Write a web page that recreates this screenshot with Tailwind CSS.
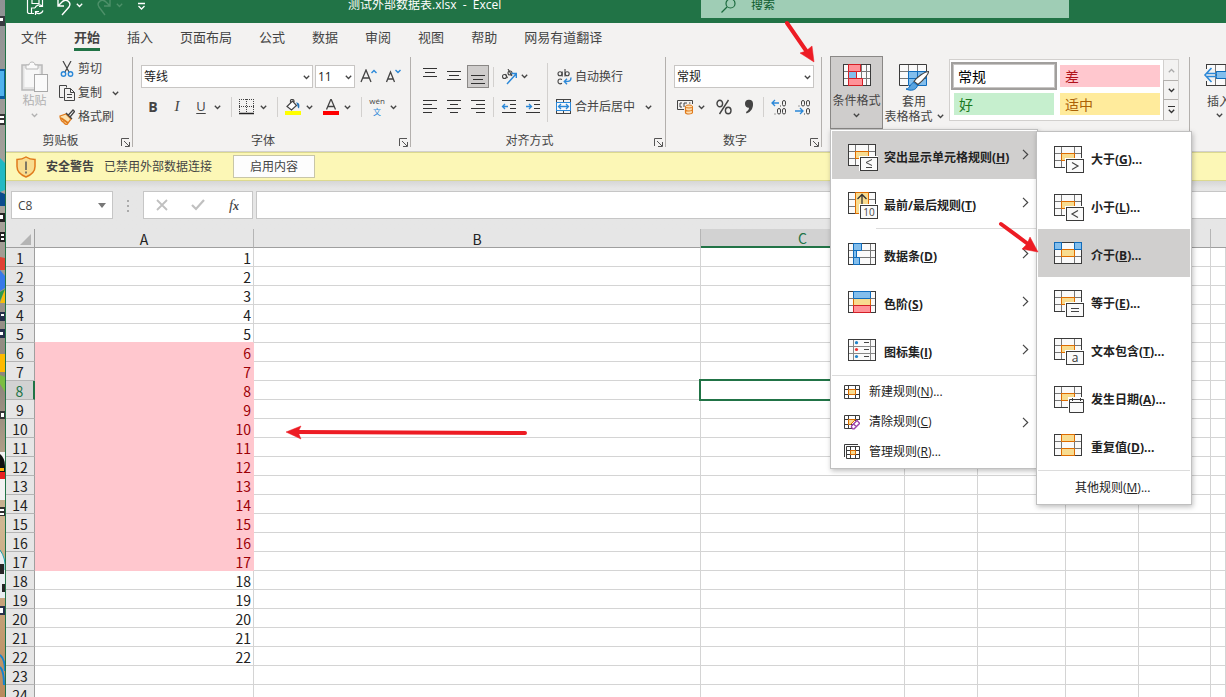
<!DOCTYPE html>
<html lang="zh-CN">
<head>
<meta charset="utf-8">
<title>测试外部数据表.xlsx - Excel</title>
<meta name="viewport" content="width=device-width, initial-scale=1">
<script src="https://cdn.jsdelivr.net/npm/@tailwindcss/browser@4"></script>
</head>
<body class="relative flex h-screen overflow-hidden bg-white font-['Open_Sans','Noto_Sans_CJK_SC',sans-serif] text-xs text-[#444444]">

<!-- shared icon symbols -->
<svg class="hidden" aria-hidden="true">
  <symbol id="chev" viewBox="0 0 7 5"><path d="M.8 .8 3.5 3.5 6.2 .8" fill="none" stroke="currentColor" stroke-width="1.3"/></symbol>
  <symbol id="launch" viewBox="0 0 9 9"><path d="M.5 8V.5H8M3 3l5 5M8.500 4v4.500H4" fill="none" stroke="#555"/></symbol>
  <symbol id="more" viewBox="0 0 7 11"><path d="M1 .8 5.700 5.500 1 10.200" fill="none" stroke="#444" stroke-width="1.200"/></symbol>
  <symbol id="grid" viewBox="0 0 30 27"><rect x=".5" y=".5" width="27" height="21" fill="#fafafa"/><path d="M7.500 1v20M20.500 1v20M1 7.500h26M1 14.500h26" stroke="#777" fill="none"/><rect x=".5" y=".5" width="27" height="21" fill="none" stroke="#3b3b3b"/></symbol>
  <symbol id="gridmid" viewBox="0 0 30 27"><use href="#grid" width="30" height="27"/><rect x="7.500" y="7.500" width="13" height="7" fill="#f8dc90" stroke="#de6c00"/></symbol>
  <symbol id="badge" viewBox="0 0 30 27"><path d="M11 12h19v15H11z" fill="#fff"/><rect x="12.500" y="13.500" width="17" height="13" fill="#fafafa" stroke="#3b3b3b"/></symbol>
</svg>

<!-- strip of desktop at the left of the window -->
<svg class="h-full w-[5px] shrink-0" viewBox="0 0 5 697" preserveAspectRatio="none" aria-hidden="true">
  <defs><linearGradient id="desk" x1="0" y1="0" x2="0" y2="1"><stop offset="0" stop-color="#8f9294"/><stop offset=".3" stop-color="#a9a49c"/><stop offset=".55" stop-color="#8d857b"/><stop offset=".75" stop-color="#d0b793"/><stop offset="1" stop-color="#b98a5c"/></linearGradient></defs>
  <path d="M0 0h5v697H0z" fill="url(#desk)"/>
  <path d="M0 16h5v10H0z" fill="#383a40"/><path d="M0 18h3v3H0z" fill="#fff"/>
  <path d="M0 69h5v30H0z" fill="#0a5c9d"/><path d="M0 71h4v25H0z" fill="#50b3ee"/>
  <path d="M0 114h5v11H0z" fill="#333"/><path d="M0 116h4v2H0zM0 120h4v3H0z" fill="#fff"/>
  <path d="M0 158l5 5v27l-5 2z" fill="#22b9c4"/><path d="M0 192l5 2v12H0z" fill="#0b4c8e"/>
  <path d="M0 213h5v9H0zM0 232h5v10H0z" fill="#222"/><path d="M0 215h3v4H0zM1 234h3v2H1zM1 238h3v2H1z" fill="#fff"/>
  <path d="M0 257l5 1v12H0z" fill="#df4335"/><path d="M0 270l5 6v12l-5 3z" fill="#3879e8"/><path d="M5 289v14H0z" fill="#f7bd09"/><path d="M0 292l5-3-5 12z" fill="#2a9b4b"/>
  <path d="M0 312h5v9H0zM0 329h5v9H0z" fill="#26304a"/><path d="M1 314h3v2H1zM0 332h3v3H0z" fill="#fff"/>
  <path d="M0 354h5v18H0z" fill="#fdba00"/><path d="M0 375l5 2v15l-5-8z" fill="#7cbd41"/>
  <path d="M0 411h5v8H0z" fill="#353535"/><path d="M1 413h3v4H1z" fill="#fff"/>
  <path d="M0 452h5v48H0z" fill="#f2f2f2"/><path d="M0 454q5 4 5 12v9H0z" fill="#111"/><path d="M0 472h5v7H0z" fill="#e72020"/><path d="M0 468h4v3H0z" fill="#fcb30a"/>
  <path d="M0 507h5v9H0z" fill="#303030"/><path d="M0 509h4v2H0zM0 513h4v2H0z" fill="#fff"/>
  <path d="M0 551q5 4 5 14v33H0z" fill="#e9eef0"/><path d="M0 550q6 8 5 20" stroke="#1aa2ad" fill="none"/><path d="M0 564h4v10H0zM2 584h3v8H2z" fill="#252525"/>
  <path d="M0 606h5v9H0z" fill="#26304a"/><path d="M0 608h3v5H0z" fill="#fff"/>
  <path d="M0 655q5 4 5 16M0 667q4 4 4 18" stroke="#1383cf" stroke-width="2" fill="none"/>
</svg>

<div class="flex min-w-0 flex-1 flex-col border-l border-[#217346] bg-[#e6e6e6]">

  <!-- title bar -->
  <header class="relative flex h-[23px] shrink-0 items-start bg-[#217346] text-white">
    <div class="flex h-4 w-[152px] shrink-0 items-start gap-[10px] pl-5">
      <button aria-label="保存" class="w-5"><svg class="h-4 w-5" viewBox="0 0 20 16" fill="none" stroke="#fff" stroke-width="1.200"><path d="M1.500 0v12.500l1 1H8M6 0v3.500h7V0M5.500 13V8H9M16.500 0v3"/><path d="M9 8a4.300 4.300 0 0 1 7-2M16.500 3v3.500H13M17 10.500a4.300 4.300 0 0 1-7 2M9.500 15v-3.500H13"/></svg></button>
      <button aria-label="撤消" class="flex w-[30px] items-start gap-1"><svg class="h-4 w-4" viewBox="0 0 16 16" fill="none" stroke="#fff" stroke-width="1.400"><path d="M2 0v6h6M2 6l4-4c4-4 10 0 7 5L6 15"/></svg><svg class="mt-[3px] h-[5px] w-[7px]"><use href="#chev"/></svg></button>
      <button aria-label="恢复" disabled class="flex w-[30px] items-start gap-1 text-[#4d9069]"><svg class="h-4 w-4" viewBox="0 0 16 16" fill="none" stroke="currentColor" stroke-width="1.400"><path d="M14 0v6H8M14 6l-4-4C6-2 0 2 3 7l6 8"/></svg><svg class="mt-[3px] h-[5px] w-[7px]"><use href="#chev"/></svg></button>
      <button aria-label="自定义快速访问工具栏"><svg class="h-3 w-4" viewBox="0 0 16 12" fill="none" stroke="#fff" stroke-width="1.300"><path d="M2 3.500h7M2.500 6l3 3 3-3"/></svg></button>
    </div>
    <h1 class="ml-[190px] h-4 w-[160px] -mt-[3px] shrink-0 text-xs leading-4 whitespace-pre">测试外部数据表.xlsx  -  Excel</h1>
    <label class="ml-[193px] flex h-[18px] w-[368px] items-start bg-[#9fcdb5] pl-5 text-[#0e5c2f]">
      <svg class="h-[14px] w-4" viewBox="0 0 16 14" fill="none" stroke="#1c6a3e" stroke-width="1.200"><circle cx="9.500" cy="3.500" r="4.500"/><path d="M6 7 .5 12.500"/></svg>
      <input type="text" aria-label="搜索" placeholder="搜索" class="ml-[14px] h-[10px] flex-1 bg-transparent text-xs leading-[10px] outline-none placeholder:text-[#0e5c2f]">
    </label>
  </header>

  <!-- ribbon tabs -->
  <nav class="flex h-8 shrink-0 gap-[27px] bg-[#f3f2f1] pl-[15px] text-[13px] leading-7 whitespace-nowrap">
    <a href="#">文件</a>
    <a href="#" class="h-7 border-b-[3px] border-[#217346] font-bold">开始</a>
    <a href="#">插入</a><a href="#">页面布局</a><a href="#">公式</a><a href="#">数据</a><a href="#">审阅</a><a href="#">视图</a><a href="#">帮助</a><a href="#">网易有道翻译</a>
  </nav>

  <!-- ribbon -->
  <div class="flex h-[97px] shrink-0 items-start overflow-hidden border-b border-[#d2d0ce] bg-[#f3f2f1] pt-[2px] whitespace-nowrap">

    <section class="flex h-[90px] w-[127px] shrink-0 flex-col border-r border-[#b3b0ad]">
      <div class="flex flex-1">
        <button disabled class="flex w-[53px] flex-col items-center pt-1 pl-1 text-[#b1b1b1]">
          <svg class="h-8 w-7" viewBox="0 0 28 32" fill="none"><rect x="1" y="4" width="20" height="25" fill="#e3e3e3" stroke="#b9b9b9" stroke-width="1.500"/><rect x="3.500" y="7" width="15" height="19" fill="#f7f7f7"/><path d="M5 8V4h3c0-4 6-4 6 0h3v4z" fill="#fafafa" stroke="#b9b9b9"/><rect x="13.500" y="13.500" width="13" height="17" fill="#fafafa" stroke="#a8a8a8"/></svg>
          <span class="leading-4">粘贴</span><svg class="mt-1 h-[5px] w-[7px]"><use href="#chev"/></svg>
        </button>
        <div class="flex flex-col">
          <button class="flex h-6 items-center gap-[3px]"><svg class="h-4 w-4" viewBox="0 0 16 16" fill="none"><path d="M4 0l6 11M12 0 6 11" stroke="#444" stroke-width="1.200"/><circle cx="4.500" cy="13" r="2.200" stroke="#2b88d8" stroke-width="1.400"/><circle cx="11.500" cy="13" r="2.200" stroke="#2b88d8" stroke-width="1.400"/></svg><span>剪切</span></button>
          <button class="flex h-6 items-center gap-[3px]"><svg class="h-4 w-4" viewBox="0 0 16 16" fill="none" stroke="#444"><path d="M4.500 12.500h-4V.5h7v2"/><path d="M5.500 3.500h6l4 4v8h-10zM11.500 3.500v4h4M8 9.500h5M8 12.500h5"/></svg><span>复制</span><svg class="ml-[7px] h-[5px] w-[7px]"><use href="#chev"/></svg></button>
          <button class="flex h-6 items-center gap-[3px]"><svg class="h-4 w-4" viewBox="0 0 16 16" fill="none"><path d="M1 7l6-2 5 5-4 5.500c-2 0-3-1-3.500-2.500C3 13 1 10 1 7z" fill="#fbe2b0" stroke="#e07a1b" stroke-width="1.300"/><path d="M2 9l7 5" stroke="#e07a1b" stroke-width="2"/><path d="M7 4l6 6M9 6.500 14 1l1.500 1.500L11 8" fill="#fff" stroke="#444" stroke-width="1.300"/></svg><span>格式刷</span></button>
        </div>
      </div>
      <div class="flex h-[14px] items-center leading-4"><span class="flex-1 pt-[2px] text-center">剪贴板</span><button aria-label="剪贴板设置" class="w-[17px]"><svg class="mt-1 ml-[6px] size-[9px]"><use href="#launch"/></svg></button></div>
    </section>

    <section class="flex h-[90px] w-[278px] shrink-0 flex-col border-r border-[#b3b0ad]">
      <div class="flex flex-1 flex-col gap-2 px-2 pt-2">
        <div class="flex h-[23px] items-center">
          <div class="relative h-[23px] w-[172px]"><select aria-label="字体" class="h-full w-full appearance-none border border-[#c8c6c4] bg-white pl-[2px] text-xs text-[#222]"><option>等线</option></select><svg class="pointer-events-none absolute top-[10px] right-[3px] h-[5px] w-[7px]"><use href="#chev"/></svg></div>
          <div class="relative ml-[2px] h-[23px] w-10"><select aria-label="字号" class="h-full w-full appearance-none border border-[#c8c6c4] bg-white pl-[2px] text-xs text-[#222]"><option>11</option></select><svg class="pointer-events-none absolute top-[10px] right-[3px] h-[5px] w-[7px]"><use href="#chev"/></svg></div>
          <button aria-label="增大字号" class="ml-[5px] w-[17px]"><svg class="h-4 w-[17px]" viewBox="0 0 17 16" fill="none"><path d="M1 13 6 1l5 12M2.700 9h6.600" stroke="#444" stroke-width="1.300"/><path d="M11.500 4 14 1.500 16.500 4" stroke="#2b88d8" stroke-width="1.400"/></svg></button>
          <button aria-label="减小字号" class="ml-2 w-[17px]"><svg class="h-4 w-[17px]" viewBox="0 0 17 16" fill="none"><path d="M1.500 13 5.500 3l4 10M3 10h5.200" stroke="#444" stroke-width="1.300"/><path d="M10.500 1 13 3.500 15.500 1" stroke="#2b88d8" stroke-width="1.400"/></svg></button>
        </div>
        <div class="flex h-[22px] items-center">
          <button aria-label="加粗" class="w-6 text-sm font-bold">B</button>
          <button aria-label="倾斜" class="w-6 font-['Liberation_Serif',serif] text-[15px] italic">I</button>
          <button aria-label="下划线" class="w-6 text-[13px] underline underline-offset-2">U</button>
          <button aria-label="下划线选项" class="flex w-[18px] justify-start pl-px"><svg class="h-[5px] w-[7px]"><use href="#chev"/></svg></button>
          <i class="h-5 w-px bg-[#d2d0ce]"></i>
          <button aria-label="边框" class="ml-[7px] flex items-center gap-[5px]"><svg class="size-4" viewBox="0 0 16 16" fill="none" stroke="#444"><path d="M.5 0v14M7.500 0v14M14.500 0v14M0 .5h15M0 7.500h15" stroke-dasharray="1 1"/><path d="M0 14.500h15" stroke="#222" stroke-width="1.500"/></svg><svg class="h-[5px] w-[7px]"><use href="#chev"/></svg></button>
          <i class="ml-[10px] h-5 w-px bg-[#d2d0ce]"></i>
          <button aria-label="填充颜色" class="ml-[7px] flex items-center gap-[5px]"><svg class="size-4" viewBox="0 0 16 16" fill="none"><path d="M2 7.500 7.500 2l4 4.500L6.500 11zM5.500 4V1.500C5.500 0 9 0 9 2v3" fill="#fff" stroke="#444" stroke-width="1.200"/><path d="M11 3.500c3 0 4 2 3 6-2-1-1-4-3-6z" fill="#2272b9"/><path d="M0 12h16v4H0z" fill="#ff0"/></svg><svg class="h-[5px] w-[7px]"><use href="#chev"/></svg></button>
          <button aria-label="字体颜色" class="ml-[10px] flex items-center gap-[5px]"><svg class="size-4" viewBox="0 0 16 16" fill="none"><path d="M3.500 10.500 8 0l4.500 10.500M5 7.500h6" stroke="#444" stroke-width="1.300"/><path d="M0 12h16v4H0z" fill="red"/></svg><svg class="h-[5px] w-[7px]"><use href="#chev"/></svg></button>
          <i class="ml-[10px] h-5 w-px bg-[#d2d0ce]"></i>
          <button aria-label="拼音指南" class="ml-[7px] flex items-center gap-[5px]"><span class="flex w-4 flex-col items-center text-[8px]"><span class="leading-[10px]">wén</span><span class="leading-3 text-[#2b88d8]">文</span></span><svg class="h-[5px] w-[7px]"><use href="#chev"/></svg></button>
        </div>
      </div>
      <div class="flex h-[14px] items-center leading-4"><span class="flex-1 pt-[2px] text-center">字体</span><button aria-label="字体设置" class="w-[17px]"><svg class="mt-1 ml-[6px] size-[9px]"><use href="#launch"/></svg></button></div>
    </section>

    <section class="flex h-[90px] w-[255px] shrink-0 flex-col border-r border-[#b3b0ad]">
      <div class="flex flex-1 pt-[6px]">
        <div class="flex flex-col gap-2 pt-[2px] pl-[7px]">
          <div class="flex h-[23px] items-center">
            <button aria-label="顶端对齐" class="w-6"><svg class="mx-auto h-[17px] w-[14px]" viewBox="0 0 14 17" stroke="#333"><path d="M0 .5h14M2 4.500h10M0 8.500h14"/></svg></button>
            <button aria-label="垂直居中" class="w-6"><svg class="mx-auto h-[17px] w-[14px]" viewBox="0 0 14 17" stroke="#333"><path d="M0 3.500h14M2 7.500h10M0 11.500h14"/></svg></button>
            <button aria-label="底端对齐" aria-pressed="true" class="ml-px h-[23px] w-[22px] border border-[#8a8886] bg-[#cfcdcc]"><svg class="mx-auto h-[17px] w-[14px]" viewBox="0 0 14 17" stroke="#333"><path d="M0 7.500h14M2 11.500h10M0 15.500h14"/></svg></button>
            <i class="ml-1 h-5 w-px bg-[#d2d0ce]"></i>
            <button aria-label="方向" class="ml-[7px] flex items-center gap-1"><svg class="h-4 w-4" viewBox="0 0 16 16" fill="none"><g stroke="#444" stroke-width="1.100"><circle cx="3.500" cy="7.500" r="2"/><path d="M4.500 5l2 4M7 0l4 7"/><circle cx="9" cy="4" r="2"/></g><path d="M6 15 15 5M10.500 4.500H15.300V9" stroke="#2b88d8" stroke-width="1.400"/></svg><svg class="h-[5px] w-[7px]"><use href="#chev"/></svg></button>
          </div>
          <div class="flex h-[22px] items-center">
            <button aria-label="左对齐" class="w-6"><svg class="mx-auto h-[14px] w-[14px]" viewBox="0 0 14 14" stroke="#333"><path d="M0 .5h14M0 4.500h9M0 8.500h14M0 12.500h9"/></svg></button>
            <button aria-label="居中" class="w-6"><svg class="mx-auto h-[14px] w-[14px]" viewBox="0 0 14 14" stroke="#333"><path d="M0 .5h14M3 4.500h8M0 8.500h14M3 12.500h8"/></svg></button>
            <button aria-label="右对齐" class="w-6"><svg class="mx-auto h-[14px] w-[14px]" viewBox="0 0 14 14" stroke="#333"><path d="M0 .5h14M5 4.500h9M0 8.500h14M5 12.500h9"/></svg></button>
            <i class="ml-[3px] h-5 w-px bg-[#d2d0ce]"></i>
            <button aria-label="减少缩进量" class="ml-[7px]"><svg class="h-[14px] w-4" viewBox="0 0 16 14" fill="none" stroke="#333"><path d="M1 .5h14M9 4.500h6M9 8.500h6M1 12.500h14"/><path d="M7 6.500H1.500M4 4 1.500 6.500 4 9" stroke="#2b88d8" stroke-width="1.300"/></svg></button>
            <button aria-label="增加缩进量" class="ml-2"><svg class="h-[14px] w-4" viewBox="0 0 16 14" fill="none" stroke="#333"><path d="M1 .5h14M9 4.500h6M9 8.500h6M1 12.500h14"/><path d="M1 6.500h5.500M4 4l2.500 2.500L4 9" stroke="#2b88d8" stroke-width="1.300"/></svg></button>
          </div>
        </div>
        <i class="ml-[6px] h-[59px] w-px bg-[#d2d0ce]"></i>
        <div class="flex flex-col gap-2 pt-[2px] pl-2">
          <button class="flex h-[23px] items-center"><svg class="h-4 w-4" viewBox="0 0 16 16" fill="none"><g stroke="#444" stroke-width="1.100"><circle cx="4" cy="4.800" r="2"/><path d="M6.200 2.500v5M9 0v7.500"/><circle cx="11.200" cy="4.800" r="2"/><path d="M6 10.500c-3-1.500-4 .5-4 2s1.500 3.200 4 1.800"/></g><path d="M15 8.500c0 3.500-1 4-6.500 4M11 9.800 8.300 12.500l2.700 2.800" stroke="#2b88d8" stroke-width="1.400"/></svg><span class="ml-[3px]">自动换行</span></button>
          <button class="flex h-[22px] items-center"><svg class="h-4 w-4" viewBox="0 0 16 16" fill="none"><rect x=".5" y=".5" width="14" height="14" stroke="#444"/><path d="M7.500 0v15" stroke="#444"/><rect x=".5" y="3.500" width="14" height="8" fill="#fafafa" stroke="#2b88d8"/><path d="M2.500 7.500h10M5 5 2.500 7.500 5 10M10 5l2.500 2.500L10 10" stroke="#2b88d8" stroke-width="1.300"/></svg><span class="ml-[3px]">合并后居中</span><svg class="ml-[10px] h-[5px] w-[7px]"><use href="#chev"/></svg></button>
        </div>
      </div>
      <div class="flex h-[14px] items-center leading-4"><span class="flex-1 pt-[2px] text-center">对齐方式</span><button aria-label="对齐设置" class="w-[17px]"><svg class="mt-1 ml-[6px] size-[9px]"><use href="#launch"/></svg></button></div>
    </section>

    <section class="flex h-[90px] w-[156px] shrink-0 flex-col border-r border-[#b3b0ad]">
      <div class="flex flex-1 flex-col gap-2 px-2 pt-2">
        <div class="relative h-[23px] w-[140px]"><select aria-label="数字格式" class="h-full w-full appearance-none border border-[#c8c6c4] bg-white pl-[2px] text-xs text-[#222]"><option>常规</option></select><svg class="pointer-events-none absolute top-[10px] right-[3px] h-[5px] w-[7px]"><use href="#chev"/></svg></div>
        <div class="flex h-[22px] items-center">
          <button aria-label="会计数字格式" class="ml-[3px] flex items-center gap-[5px]"><svg class="h-4 w-4" viewBox="0 0 16 16" fill="none"><path d="M7 10.500H.5v-9h15V5M5 4H3v4h2M7 8V4h3M12 4h1.500" stroke="#444"/><path d="M8.500 7.500h7v7h-7z" fill="#fde0b4"/><ellipse cx="12" cy="7.500" rx="3.500" ry="1.500" fill="#fde0b4" stroke="#e07a1b"/><path d="M8.500 7.500v6c0 2 7 2 7 0v-6M8.500 10.500c0 2 7 2 7 0" stroke="#e07a1b" stroke-width="1.200"/></svg><svg class="h-[5px] w-[7px]"><use href="#chev"/></svg></button>
          <button aria-label="百分比样式" class="ml-[9px] w-5"><svg class="mx-auto size-4" viewBox="0 0 16 16" fill="none" stroke="#444" stroke-width="1.400"><ellipse cx="3.800" cy="4.500" rx="2.800" ry="3.300"/><ellipse cx="12.200" cy="11.500" rx="2.800" ry="3.300"/><path d="M12.500 1 3.500 15"/></svg></button>
          <button aria-label="千位分隔样式" class="ml-[7px] w-4"><svg class="mx-auto h-4 w-[10px]" viewBox="0 0 10 16"><path d="M1 5a4 4 0 0 1 8-.5C9.300 9 7 13 2.500 14.500L2 13c2-1 3-2.500 3-4.200C3 9 1 7.500 1 5z" fill="#444"/></svg></button>
          <i class="ml-[6px] h-5 w-px bg-[#d2d0ce]"></i>
          <button aria-label="增加小数位数" class="ml-[7px]"><svg class="h-4 w-4" viewBox="0 0 16 16" fill="none"><path d="M8 4H1M4 1 1 4l3 3" stroke="#2b88d8" stroke-width="1.300"/><g stroke="#444"><rect x="11.500" y="1.500" width="3" height="5.500" rx="1.500"/><rect x="6.500" y="9.500" width="3" height="5.500" rx="1.500"/><rect x="11.500" y="9.500" width="3" height="5.500" rx="1.500"/><path d="M9 7h1M3.500 15h1"/></g></svg></button>
          <button aria-label="减少小数位数" class="ml-2"><svg class="h-4 w-4" viewBox="0 0 16 16" fill="none"><path d="M0 12h7.500M5 9l3 3-3 3" stroke="#2b88d8" stroke-width="1.300"/><g stroke="#444"><rect x="6.500" y="1.500" width="3" height="5.500" rx="1.500"/><rect x="11.500" y="1.500" width="3" height="5.500" rx="1.500"/><rect x="11.500" y="9.500" width="3" height="5.500" rx="1.500"/><path d="M3.500 7h1M9 15h1"/></g></svg></button>
        </div>
      </div>
      <div class="flex h-[14px] items-center leading-4"><span class="flex-1 pt-[2px] text-center">数字</span><button aria-label="数字设置" class="w-[17px]"><svg class="mt-1 ml-[6px] size-[9px]"><use href="#launch"/></svg></button></div>
    </section>

    <section class="flex h-[90px] w-[368px] shrink-0 items-start border-r border-[#b3b0ad] pl-2">
      <button aria-expanded="true" class="-mt-px flex h-[73px] w-[53px] flex-col items-center border border-[#8a8886] bg-[#cfcdcc] pt-[7px]">
        <svg class="h-[27px] w-[30px]" viewBox="0 0 30 27"><rect x="1.500" y=".5" width="27" height="21" fill="#fafafa"/><path d="M6.500 1v20M19.500 1v20M24.500 1v20M2 7.500h26M2 14.500h26" stroke="#777"/><rect x="1.500" y=".5" width="27" height="21" fill="none" stroke="#3b3b3b"/><path d="M6.500 .5h12v7h-12zM6.500 14.500h14v7h-14z" fill="#ff9298" stroke="#d41f26"/><path d="M6.500 7.500h8v7h-8z" fill="#83beec" stroke="#d41f26"/></svg>
        <span class="mt-[2px] leading-4">条件格式</span><svg class="mt-1 h-[5px] w-[7px]"><use href="#chev"/></svg>
      </button>
      <button class="ml-px flex w-[60px] flex-col items-center pt-[7px] leading-[15px]">
        <svg class="h-[27px] w-[31px]" viewBox="0 0 31 27"><rect x=".5" y=".5" width="27" height="21" fill="#fafafa"/><path d="M9.500 7.500h18v14h-18z" fill="#83beec"/><path d="M9.500 1v20M18.500 1v20M1 7.500h27M1 14.500h27" stroke="#777"/><path d="M9.500 7.500h18v14h-18zM18.500 7v14M9 14.500h19" fill="none" stroke="#0f6cbd"/><path d="M27.500 7V.5H.5v21H9" fill="none" stroke="#3b3b3b"/><path d="M15 17.500C18 13 26 7.500 29.500 7.500c.5 2-5 8.500-10.500 13z" fill="#fff" stroke="#444" stroke-width="1.100"/><path d="M7 25c4 0 4-6 8-6.500l3.500 3C17.500 26 12 27.500 7 25z" fill="#5aa4e0" stroke="#0f6cbd"/></svg>
        <span class="mt-[3px]">套用</span><span class="flex items-center">表格格式<svg class="ml-1 h-[5px] w-[7px]"><use href="#chev"/></svg></span>
      </button>
      <div class="mt-[2px] ml-[5px] flex h-[62px] w-[230px] border border-[#d2d0ce] bg-white font-['Noto_Sans_CJK_SC',sans-serif] text-sm">
        <div class="grid flex-1 grid-cols-[106px_100px] grid-rows-[28px_22px] gap-x-[3px] gap-y-[3px] pt-[2px] pl-px">
          <button class="border-2 border-[#a19f9d] pl-[5px] text-left leading-[20px] text-black outline-1 -outline-offset-3 outline-[#c8c6c4]">常规</button>
          <button class="mt-[3px] h-[22px] bg-[#ffc7ce] pl-[5px] text-left leading-5 text-[#b0121b]">差</button>
          <button class="ml-[3px] w-[100px] bg-[#c6efce] pl-[5px] text-left leading-5 text-[#1b7a1f]">好</button>
          <button class="bg-[#ffeb9c] pl-[5px] text-left leading-5 text-[#ab6207]">适中</button>
        </div>
        <div class="flex w-[15px] flex-col text-[#333]">
          <button aria-label="上一行" class="flex h-5 items-center justify-center border-l border-[#d2d0ce] bg-[#f3f2f1] text-[#aaa]"><svg class="h-[5px] w-[7px] rotate-180"><use href="#chev"/></svg></button>
          <button aria-label="下一行" class="flex h-5 items-center justify-center border border-r-0 border-[#b3b0ad] bg-[#f3f2f1]"><svg class="h-[5px] w-[7px]"><use href="#chev"/></svg></button>
          <button aria-label="其他样式" class="flex h-5 flex-col items-center justify-center gap-[2px] border-l border-[#b3b0ad] bg-[#f3f2f1]"><i class="h-px w-[7px] bg-[#333]"></i><svg class="h-[5px] w-[7px]"><use href="#chev"/></svg></button>
        </div>
      </div>
    </section>

    <section class="flex h-[90px] shrink-0 items-start pl-3">
      <button class="flex w-[34px] flex-col items-center pt-[7px]">
        <svg class="h-[27px] w-8" viewBox="0 0 32 27"><rect x="3.500" y=".5" width="28" height="21" fill="#fafafa"/><path d="M12.500 1v20M22.500 1v20M4 7.500h28M4 14.500h28" stroke="#777"/><rect x="3.500" y=".5" width="28" height="21" fill="none" stroke="#3b3b3b"/><path d="M0 5h12v12H0z" fill="#f3f2f1"/><path d="M13.500 7.500H32v7H13.500z" fill="#83beec" stroke="#0f6cbd"/><path d="M14 9.500H4M14 12.500H4M8.500 4 2 11l6.500 7" fill="none" stroke="#2b88d8" stroke-width="1.600"/></svg>
        <span class="mt-[3px] leading-4">插入</span><svg class="mt-[3px] h-[5px] w-[7px]"><use href="#chev"/></svg>
      </button>
    </section>
  </div>

  <!-- security warning -->
  <div role="alert" class="flex h-[29px] shrink-0 items-center border-y border-[#dcd98f] bg-[#fcf7b6] pl-[10px]">
    <svg class="h-[22px] w-5" viewBox="0 0 20 22"><path d="M10 1c3 2 6 2.500 9 2.500v7c0 5-4 8.500-9 10.500C5 19 1 15.500 1 10.500v-7C4 3.500 7 3 10 1z" fill="#f8dc90" stroke="#e07a1b" stroke-width="1.500"/><path d="M10 5.500v8.500M10 15.500v2" stroke="#555" stroke-width="1.500"/></svg>
    <strong class="ml-[10px]">安全警告</strong><span class="ml-[10px]">已禁用外部数据连接</span>
    <button class="ml-[21px] h-[23px] w-[82px] border border-[#c8c6a8] bg-[#fdfdfd]">启用内容</button>
  </div>

  <!-- formula bar -->
  <div class="flex h-12 shrink-0 items-start bg-linear-to-b from-[#d6d6d6] via-[#e6e6e6] via-15% to-[#e6e6e6] pt-[10px]">
    <div class="ml-[5px] flex h-7 w-[102px] items-center border border-[#c6c6c6] bg-white">
      <input aria-label="名称框" value="C8" class="w-[86px] bg-transparent pt-px pl-[6px] text-xs outline-none"><button aria-label="名称列表"><svg class="h-[5px] w-2" viewBox="0 0 8 5"><path d="M0 0h8L4 5z" fill="#777"/></svg></button>
    </div>
    <svg class="mt-[9px] ml-[13px] h-3 w-1" viewBox="0 0 4 12" fill="#aaa"><path d="M1 0h2v2H1zM1 5h2v2H1zM1 10h2v2H1z"/></svg>
    <div class="ml-[13px] flex h-7 w-[110px] items-center border border-[#c6c6c6] bg-white">
      <button aria-label="取消" class="w-9"><svg class="mx-auto size-3" viewBox="0 0 12 12"><path d="m1 1 10 10M11 1 1 11" stroke="#c0c0c0" stroke-width="1.800"/></svg></button>
      <button aria-label="输入" class="w-9"><svg class="mx-auto h-3 w-[14px]" viewBox="0 0 14 12"><path d="m1 6 4 4 8-9" stroke="#c0c0c0" stroke-width="2.200" fill="none"/></svg></button>
      <button aria-label="插入函数" class="w-9 font-['Liberation_Serif',serif] text-[15px] leading-4 italic">f<span class="text-[12px] font-bold">x</span></button>
    </div>
    <input aria-label="编辑栏" class="ml-[3px] h-7 min-w-0 flex-1 border border-r-0 border-[#c6c6c6] bg-white px-2 outline-none">
  </div>

  <!-- worksheet -->
  <div class="min-h-0 flex-1 overflow-hidden bg-white">
    <table class="w-full table-fixed border-separate border-spacing-0 font-['Noto_Sans_CJK_SC',sans-serif] text-sm leading-4 text-[#222]">
      <colgroup><col class="w-[29px]"><col class="w-[219px]"><col class="w-[447px]"><col class="w-[204px]"><col class="w-[73px]"><col class="w-[88px]"><col class="w-[73px]"><col class="w-[72px]"><col></colgroup>
      <thead><tr class="h-[19px] bg-[#e6e6e6]">
        <th scope="col" class="border-r border-b border-[#9f9f9f] p-0"><svg class="mt-[2px] ml-[14px] h-[11px] w-[11px]" viewBox="0 0 11 11" role="img" aria-label="全选"><path d="M11 0v11H0z" fill="#b4b4b4"/></svg></th>
        <th scope="col" class="border-r border-b border-r-[#b5b5b5] border-b-[#9f9f9f] px-0 pt-[2px] pb-0 font-normal">A</th>
        <th scope="col" class="border-r border-b border-r-[#b5b5b5] border-b-[#9f9f9f] px-0 pt-[2px] pb-0 font-normal">B</th>
        <th scope="col" class="border-r border-b-2 border-r-[#b5b5b5] border-b-[#217346] bg-[#d2d2d2] px-0 pt-[2px] pb-0 font-normal leading-[15px] text-[#217346]">C</th>
        <th scope="col" class="border-r border-b border-r-[#b5b5b5] border-b-[#9f9f9f] px-0 pt-[2px] pb-0 font-normal">D</th>
        <th scope="col" class="border-r border-b border-r-[#b5b5b5] border-b-[#9f9f9f] px-0 pt-[2px] pb-0 font-normal">E</th>
        <th scope="col" class="border-r border-b border-r-[#b5b5b5] border-b-[#9f9f9f] px-0 pt-[2px] pb-0 font-normal">F</th>
        <th scope="col" class="border-r border-b border-r-[#b5b5b5] border-b-[#9f9f9f] px-0 pt-[2px] pb-0 font-normal">G</th>
        <th scope="col" class="border-b border-b-[#9f9f9f] p-0"></th>
      </tr></thead>
      <tbody id="rows"></tbody>
    </table>
  </div>
</div>

<!-- conditional formatting menu -->
<div role="menu" aria-label="条件格式" class="absolute top-[129px] left-[830px] w-[208px] border border-[#c0c0c0] bg-white p-px text-[#222] shadow-[1px_2px_5px_rgba(0,0,0,.25)]">
  <button role="menuitem" class="flex h-12 w-full items-start bg-[#d0cfce] pt-[13px] pl-4">
    <svg class="h-[27px] w-[30px]" viewBox="0 0 30 27"><use href="#gridmid"/><use href="#badge"/><path d="M24 15.500 18 18.500l6 3M18 23.500h6" stroke="#444" fill="none"/></svg>
    <strong class="ml-[6px] leading-7">突出显示单元格规则(<u>H</u>)</strong><svg class="mt-[5px] mr-[7px] ml-auto h-[11px] w-[7px]"><use href="#more"/></svg>
  </button>
  <button role="menuitem" class="flex h-12 w-full items-start pt-[13px] pl-4">
    <svg class="h-[27px] w-[30px]" viewBox="0 0 30 27"><use href="#grid"/><path d="M7.500 .5h13v21h-13z" fill="#f8dc90" stroke="#de6c00"/><path d="M14 13V3M9.500 7 14 2.500 18.500 7" stroke="#333" stroke-width="1.300" fill="none"/><use href="#badge"/><text x="21" y="24" text-anchor="middle" font-size="10" font-family="Open Sans" fill="#444">10</text></svg>
    <strong class="ml-[6px] leading-7">最前/最后规则(<u>T</u>)</strong><svg class="mt-[5px] mr-[7px] ml-auto h-[11px] w-[7px]"><use href="#more"/></svg>
  </button>
  <hr class="my-px ml-11 border-[#dcdcdc]">
  <button role="menuitem" class="flex h-12 w-full items-start pt-[13px] pl-4">
    <svg class="h-[27px] w-[30px]" viewBox="0 0 30 27"><rect x=".5" y=".5" width="27" height="21" fill="#fafafa"/><path d="M5.500 1v20M22.500 1v20M1 7.500h26M1 14.500h26" stroke="#777"/><rect x=".5" y=".5" width="27" height="21" fill="none" stroke="#3b3b3b"/><path d="M5.500 .5h8v7h-8zM5.500 7.500h3v7h-3zM5.500 14.500h6v7h-6z" fill="#83beec" stroke="#0f6cbd"/></svg>
    <strong class="ml-[6px] leading-7">数据条(<u>D</u>)</strong><svg class="mt-[5px] mr-[7px] ml-auto h-[11px] w-[7px]"><use href="#more"/></svg>
  </button>
  <button role="menuitem" class="flex h-12 w-full items-start pt-[13px] pl-4">
    <svg class="h-[27px] w-[30px]" viewBox="0 0 30 27"><rect x=".5" y=".5" width="27" height="21" fill="#fafafa" stroke="#3b3b3b"/><path d="M1 7.500h26M1 14.500h26" stroke="#777"/><path d="M5.500 7.500h17v7h-17z" fill="#f8dc90" stroke="#de6c00"/><path d="M5.500 .5h17v7h-17z" fill="#83beec" stroke="#0f6cbd"/><path d="M5.500 14.500h17v7h-17z" fill="#ff9298" stroke="#d41f26"/></svg>
    <strong class="ml-[6px] leading-7">色阶(<u>S</u>)</strong><svg class="mt-[5px] mr-[7px] ml-auto h-[11px] w-[7px]"><use href="#more"/></svg>
  </button>
  <button role="menuitem" class="flex h-12 w-full items-start pt-[13px] pl-4">
    <svg class="h-[27px] w-[30px]" viewBox="0 0 30 27"><rect x=".5" y=".5" width="27" height="21" fill="#fafafa"/><path d="M5.500 1v20M22.500 1v20M1 7.500h26M1 14.500h26" stroke="#888"/><rect x=".5" y=".5" width="27" height="21" fill="none" stroke="#3b3b3b"/><path d="M16 3.500h5M16 10.500h5M16 17.500h5" stroke="#444"/><circle cx="8.500" cy="3.700" r="1.600" fill="#1f83c9"/><circle cx="8.500" cy="10.500" r="1.600" fill="#f03030"/><circle cx="8.500" cy="17.500" r="1.600" fill="#1f83c9"/></svg>
    <strong class="ml-[6px] leading-7">图标集(<u>I</u>)</strong><svg class="mt-[5px] mr-[7px] ml-auto h-[11px] w-[7px]"><use href="#more"/></svg>
  </button>
  <hr class="my-px border-[#dcdcdc]">
  <button role="menuitem" class="flex h-[30px] w-full items-center pl-3"><svg class="size-4" viewBox="0 0 16 16" fill="none"><path d="M.5 1.500h15v13H.5zM4.500 2v12M11.500 2v12M1 5.500h14M1 10.500h14" stroke="#3b3b3b"/><path d="M4.500 5.500h7v5h-7z" fill="#f8dc90" stroke="#de6c00"/></svg><span class="ml-[9px]">新建规则(<u>N</u>)...</span></button>
  <button role="menuitem" class="flex h-[30px] w-full items-center pl-3"><svg class="size-4" viewBox="0 0 16 16" fill="none"><path d="M15.500 6V1.500H.5v13H8M4.500 2v12M11.500 2v5M1 5.500h14M1 10.500h8" stroke="#3b3b3b"/><path d="M4.500 5.500h7l-5 5h-2z" fill="#f8dc90" stroke="#de6c00"/><path d="m7.500 12 5.500-5.500 2.700 2.800-5.500 5.500H8.800l-1.300-1.300zM9.500 10l3 2.700" fill="#fff" stroke="#9a3fa8" stroke-width="1.300"/></svg><span class="ml-[9px]">清除规则(<u>C</u>)</span><svg class="mr-[7px] ml-auto h-[11px] w-[7px]"><use href="#more"/></svg></button>
  <button role="menuitem" class="flex h-[30px] w-full items-center pl-3"><svg class="size-4" viewBox="0 0 16 16" fill="none"><path d="M.5 13V.5H14M2.500 2.500h13v12h-13zM6.500 3v11M11.500 3v11M3 6.500h12M3 10.500h12" stroke="#3b3b3b"/><path d="M6.500 6.500h5v4h-5z" fill="#f8dc90" stroke="#de6c00"/></svg><span class="ml-[9px]">管理规则(<u>R</u>)...</span></button>
</div>

<!-- highlight cells submenu -->
<div role="menu" aria-label="突出显示单元格规则" class="absolute top-[131px] left-[1036px] w-[156px] border border-[#c0c0c0] bg-white p-px text-[#222] shadow-[1px_2px_5px_rgba(0,0,0,.25)]">
  <button role="menuitem" class="flex h-12 w-full items-start pt-[13px] pl-4"><svg class="h-[27px] w-[30px]" viewBox="0 0 30 27"><use href="#gridmid"/><use href="#badge"/><path d="m18 16.500 6 3.500-6 3.500" stroke="#444" stroke-width="1.200" fill="none"/></svg><strong class="ml-[7px] leading-7">大于(<u>G</u>)...</strong></button>
  <button role="menuitem" class="flex h-12 w-full items-start pt-[13px] pl-4"><svg class="h-[27px] w-[30px]" viewBox="0 0 30 27"><use href="#gridmid"/><use href="#badge"/><path d="m24 16.500-6 3.500 6 3.500" stroke="#444" stroke-width="1.200" fill="none"/></svg><strong class="ml-[7px] leading-7">小于(<u>L</u>)...</strong></button>
  <button role="menuitem" class="flex h-12 w-full items-start bg-[#d0cfce] pt-[13px] pl-4"><svg class="h-[27px] w-[30px]" viewBox="0 0 30 27"><use href="#gridmid"/><path d="M.5 .5h7v7h-7zM20.500 .5h7v7h-7z" fill="#83beec" stroke="#0f6cbd"/></svg><strong class="ml-[7px] leading-7">介于(<u>B</u>)...</strong></button>
  <button role="menuitem" class="flex h-12 w-full items-start pt-[13px] pl-4"><svg class="h-[27px] w-[30px]" viewBox="0 0 30 27"><use href="#gridmid"/><use href="#badge"/><path d="M17 18.500h8M17 21.500h8" stroke="#444"/></svg><strong class="ml-[7px] leading-7">等于(<u>E</u>)...</strong></button>
  <button role="menuitem" class="flex h-12 w-full items-start pt-[13px] pl-4"><svg class="h-[27px] w-[30px]" viewBox="0 0 30 27"><use href="#gridmid"/><use href="#badge"/><text x="21" y="24" text-anchor="middle" font-size="12" font-family="Open Sans" fill="#333">a</text></svg><strong class="ml-[7px] leading-7">文本包含(<u>T</u>)...</strong></button>
  <button role="menuitem" class="flex h-12 w-full items-start pt-[13px] pl-4"><svg class="h-[27px] w-[30px]" viewBox="0 0 30 27"><use href="#gridmid"/><path d="M14 11h16v16H14z" fill="#fff"/><path d="M15.500 13.500h14v13h-14zM15.500 16.500h14M18.500 12v3M26.500 12v3" fill="#fafafa" stroke="#3b3b3b"/></svg><strong class="ml-[7px] leading-7">发生日期(<u>A</u>)...</strong></button>
  <button role="menuitem" class="flex h-12 w-full items-start pt-[13px] pl-4"><svg class="h-[27px] w-[30px]" viewBox="0 0 30 27"><use href="#grid"/><path d="M7.500 .5h13v7h-13zM7.500 14.500h13v7h-13z" fill="#f8dc90" stroke="#de6c00"/></svg><strong class="ml-[7px] leading-7">重复值(<u>D</u>)...</strong></button>
  <hr class="mt-px mb-[2px] border-[#dcdcdc]">
  <button role="menuitem" class="flex h-[30px] w-full items-center pl-[37px]"><span>其他规则(<u>M</u>)...</span></button>
</div>

<!-- annotation arrows -->
<svg class="pointer-events-none absolute top-0 left-0 h-[697px] w-[1226px]" viewBox="0 0 1226 697" fill="#ed1c24" stroke="#ed1c24" aria-hidden="true">
  <path d="m787 23 20 29M1001 224l27 20M525 433l-227-1" stroke-width="4" stroke-linecap="round"/>
  <path d="M814 62l-14-9 6-2 6-5zM1038 252l-16-3 5-5 3-7zM286 432l15-6-3 6 3 7z" stroke-width=".5"/>
</svg>

<script>
  const lastValue = 22, firstHot = 6, lastHot = 17, active = 8, rowCount = 24;
  const blank = '<td class="border-r border-b border-[#d4d4d4] p-0"></td>';
  let html = '';
  for (let r = 1; r <= rowCount; r++) {
    const head = r === active
      ? 'border-r-2 border-b border-r-[#217346] border-b-[#b5b5b5] bg-[#d2d2d2] px-0 pt-[2px] pb-0 text-center font-normal text-[#217346]'
      : 'border-r border-b border-r-[#9f9f9f] border-b-[#b5b5b5] bg-[#e6e6e6] px-0 pt-[2px] pb-0 text-center font-normal';
    const cell = r >= firstHot && r <= lastHot
      ? 'border-r border-b border-[#ffc7ce] bg-[#ffc7ce] pt-[2px] pb-0 pr-[2px] pl-0 text-right text-[#9c0006]'
      : r === firstHot - 1
        ? 'border-r border-b border-r-[#d4d4d4] border-b-[#ffc7ce] pt-[2px] pb-0 pr-[2px] pl-0 text-right'
        : 'border-r border-b border-[#d4d4d4] pt-[2px] pb-0 pr-[2px] pl-0 text-right';
    const c = r === active
      ? '<td class="relative border-r border-b border-[#d4d4d4] p-0"><div class="absolute -inset-[2px] border-2 border-[#217346]"></div></td>'
      : blank;
    html += '<tr class="h-[19px]"><th scope="row" class="' + head + '">' + r + '</th><td class="' + cell + '">' +
      (r <= lastValue ? r : '') + '</td>' + blank + c + blank + blank + blank + blank + blank + '</tr>';
  }
  document.getElementById('rows').innerHTML = html;
</script>
</body>
</html>
